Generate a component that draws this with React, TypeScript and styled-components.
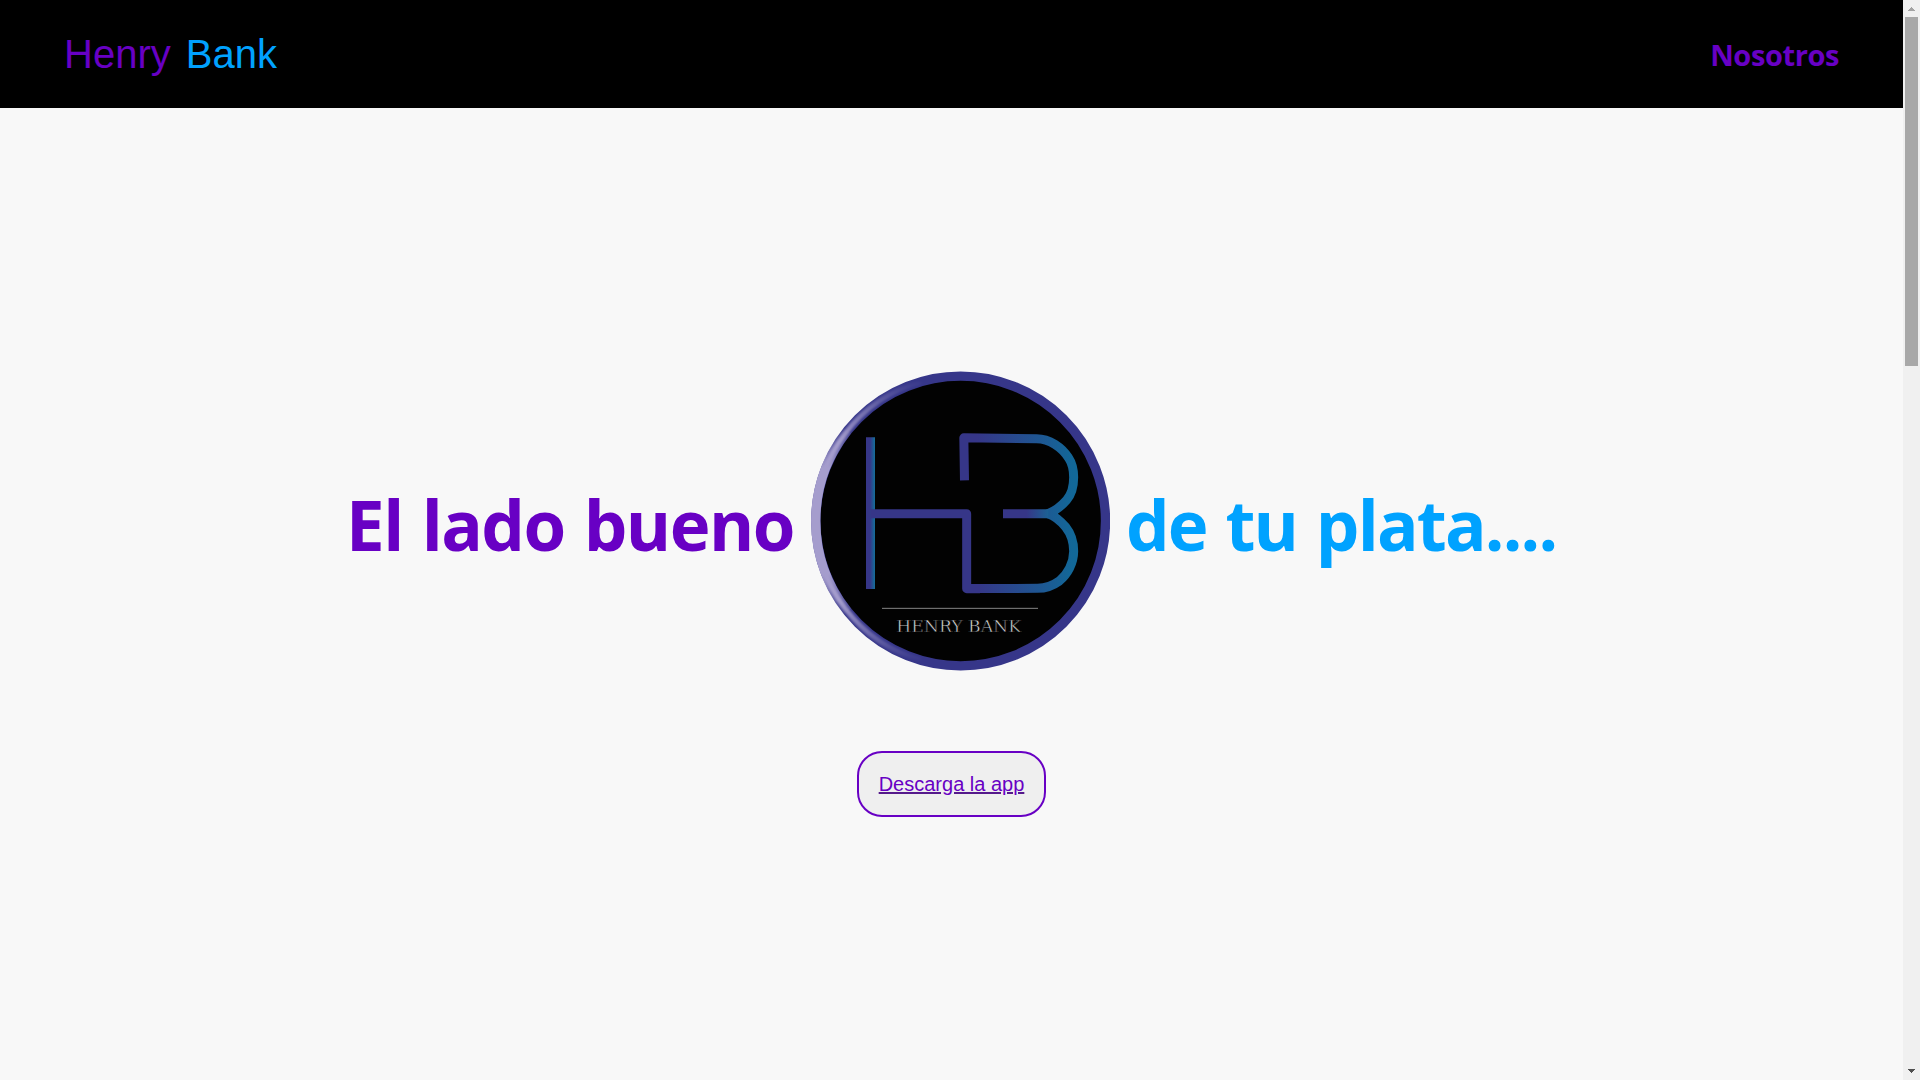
import React from "react";
import styled, { createGlobalStyle } from "styled-components";

const purple = "#6800c4";
const blue = "#00a2ff";

const GlobalStyle = createGlobalStyle`
  * { box-sizing: border-box; }
  html, body { margin: 0; height: 100%; overflow: hidden; background: #f8f8f8; }
`;

const Window = styled.div`
  display: grid;
  grid-template-columns: minmax(0, 1fr) 17px;
  height: 1080px;
  background: #f8f8f8;
`;

const Page = styled.div`
  display: flex;
  flex-direction: column;
  min-width: 0;
`;

const Header = styled.header`
  display: flex;
  align-items: center;
  justify-content: space-between;
  height: 108px;
  padding: 0 64px;
  background: #000;
`;

const Brand = styled.div`
  display: flex;
  gap: 15px;
  font: 40px/46px "Liberation Sans", Arial, sans-serif;
`;

const Tint = styled.span<{ $color: string }>`
  color: ${(p) => p.$color};
`;

const NavLink = styled.a`
  padding-top: 1px;
  color: ${purple};
  font: 700 29px/40px "Open Sans", "Segoe UI", sans-serif;
  letter-spacing: -0.4px;
`;

const Hero = styled.main`
  display: flex;
  flex-direction: column;
  align-items: center;
  padding-top: 263px;
`;

const Slogan = styled.h1`
  display: flex;
  align-items: center;
  height: 300px;
  margin: 0;
  font: 700 69px/94px "Open Sans", "Segoe UI", sans-serif;
  white-space: nowrap;
`;

const SloganPart = styled.span<{ $color: string; $width: number; $spacing: number }>`
  width: ${(p) => p.$width}px;
  padding-top: 5px;
  color: ${(p) => p.$color};
  letter-spacing: ${(p) => p.$spacing}px;
  word-spacing: 2.5px;
`;

const LogoArt = styled.svg`
  display: block;
  flex: none;
  width: 299px;
  height: 300px;
  margin-right: 16px;
`;

const LogoName = styled.text`
  font: 400 52px "DejaVu Serif", serif;
  fill: #dcdcdc;
  stroke: #020202;
  stroke-width: 1.6px;
`;

const Download = styled.button`
  width: 189px;
  height: 66px;
  margin-top: 80px;
  padding: 0;
  border: 2px solid ${purple};
  border-radius: 25px;
  background: #efefef;
`;

const DownloadLink = styled.a`
  color: ${purple};
  font: 20px/23px "Liberation Sans", Arial, sans-serif;
  text-decoration: underline #551a8b;
`;

const ScrollBar = styled.aside`
  display: flex;
  flex-direction: column;
  align-items: center;
  justify-content: space-between;
  background: #f0f0f0;
`;

const Thumb = styled.div`
  width: 13px;
  height: 349px;
  margin-bottom: auto;
  background: #a8a8a8;
`;

const Arrow = styled.svg`
  display: block;
  width: 17px;
  height: 17px;
`;

function BankLogo() {
  return (
    <LogoArt viewBox="33 33 897 900" preserveAspectRatio="none">
      <defs>
        <linearGradient id="stem" x1="198" x2="225" y1="0" y2="0" gradientUnits="userSpaceOnUse">
          <stop offset="0.45" stopColor="#363688" />
          <stop offset="1" stopColor="#13709a" />
        </linearGradient>
        <linearGradient id="bowl" x1="530" x2="820" y1="0" y2="0" gradientUnits="userSpaceOnUse">
          <stop offset="0" stopColor="#363688" />
          <stop offset="1" stopColor="#126898" />
        </linearGradient>
        <linearGradient id="middle" x1="680" x2="745" y1="0" y2="0" gradientUnits="userSpaceOnUse">
          <stop offset="0" stopColor="#363688" />
          <stop offset="1" stopColor="#1c6295" />
        </linearGradient>
        <linearGradient id="shine" x1="0" x2="0" y1="60" y2="905" gradientUnits="userSpaceOnUse">
          <stop offset="0" stopColor="#a59dcd" stopOpacity="0" />
          <stop offset="0.1" stopColor="#a59dcd" stopOpacity="0.5" />
          <stop offset="0.22" stopColor="#a59dcd" />
          <stop offset="0.78" stopColor="#a59dcd" />
          <stop offset="0.9" stopColor="#a59dcd" stopOpacity="0.5" />
          <stop offset="1" stopColor="#a59dcd" stopOpacity="0" />
        </linearGradient>
        <linearGradient id="shineCore" x1="0" x2="0" y1="200" y2="766" gradientUnits="userSpaceOnUse">
          <stop offset="0" stopColor="#a59dcd" stopOpacity="0" />
          <stop offset="0.22" stopColor="#a59dcd" />
          <stop offset="0.78" stopColor="#a59dcd" />
          <stop offset="1" stopColor="#a59dcd" stopOpacity="0" />
        </linearGradient>
        <filter id="soft" x="-10%" y="-10%" width="120%" height="120%">
          <feGaussianBlur stdDeviation="3" />
        </filter>
      </defs>
      <circle cx="482" cy="483" r="434.5" fill="#020202" stroke="#363689" strokeWidth="28" />
      <g fill="none">
        <path d="M363 65A434.500 434.500 0 0 0 363 901" stroke="url(#shine)" strokeWidth="15" filter="url(#soft)" />
        <path d="M142 212A434.500 434.500 0 0 0 142 754" stroke="url(#shineCore)" strokeWidth="28" />
      </g>
      <path d="M198 232H225V687H198Z" fill="url(#stem)" />
      <g fill="none" strokeWidth="27" strokeLinejoin="round">
        <path
          d="M493.500 361L491.500 233.500L710 236C748 236 786 262 806 294C818 312 821 330 821 352C821 383 816 402 800 420C780 443 762 454 744 461C762 467 782 483 797 501C813 521 821 545 821 574C821 609 803 643 778 663C756 679 737 685 713 685L560 685.500H500"
          stroke="url(#bowl)"
        />
        <path d="M609 461H745" stroke="url(#middle)" />
        <path d="M212 461H500V686H540" stroke="#363688" />
      </g>
      <path d="M246 745H714" stroke="#858585" strokeWidth="3" />
      <LogoName x="289" y="817" textLength="374" lengthAdjust="spacingAndGlyphs">
        HENRY BANK
      </LogoName>
    </LogoArt>
  );
}

export default function App() {
  return (
    <>
      <GlobalStyle />
      <Window>
        <Page>
          <Header>
            <Brand>
              <Tint $color={purple}>Henry</Tint>
              <Tint $color={blue}>Bank</Tint>
            </Brand>
            <NavLink>Nosotros</NavLink>
          </Header>
          <Hero>
            <Slogan>
              <SloganPart $color={purple} $width={465} $spacing={-1.5}>El lado bueno</SloganPart>
              <BankLogo />
              <SloganPart $color={blue} $width={431} $spacing={-1.8}>de tu plata....</SloganPart>
            </Slogan>
            <Download>
              <DownloadLink>Descarga la app</DownloadLink>
            </Download>
          </Hero>
        </Page>
        <ScrollBar>
          <Arrow viewBox="0 0 17 17" shapeRendering="crispEdges">
            <path d="M8 7h1v1h1v1h1v1h1v1H5v-1h1V9h1V8h1z" fill="#a3a3a3" />
          </Arrow>
          <Thumb />
          <Arrow viewBox="0 0 17 17" shapeRendering="crispEdges">
            <path d="M5 6h7v1h-1v1h-1v1H9v1H8V9H7V8H6V7H5z" fill="#505050" />
          </Arrow>
        </ScrollBar>
      </Window>
    </>
  );
}
